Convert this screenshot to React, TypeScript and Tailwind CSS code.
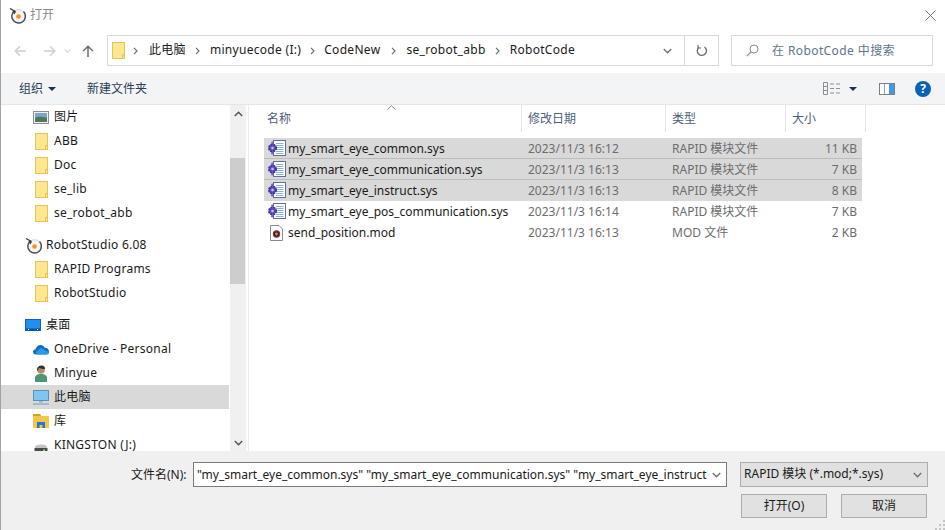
const FONT = "font-['Noto_Sans','Noto_Sans_CJK_SC',sans-serif]";

const FolderIcon = () => (
    <svg width="13" height="17" viewBox="0 0 13 17" className="shrink-0">
        <rect x="0.5" y="0.5" width="12" height="16" fill="#fde88f" stroke="#e6c45c" />
        <path d="M10.500 16.500v-4h2" fill="#f5d670" stroke="#e6c45c" />
    </svg>
);

const RobotIcon = () => (
    <svg width="17" height="17" viewBox="0 0 17 17" className="shrink-0">
        <circle cx="9.500" cy="9.500" r="6.800" fill="#f4f4f4" stroke="#d5d5d5" />
        <path d="M5 4.200A6.800 6.800 0 1 0 14.500 4.500" fill="none" stroke="#4d4d4d" strokeWidth="1.400" />
        <circle cx="9.500" cy="9.500" r="2.300" fill="#f29423" />
        <path d="M1 1.500 6.500 4.500M6.500 4.500l-2.800.3M6.500 4.500 5 7" fill="none" stroke="#333" strokeWidth="1.200" />
    </svg>
);

const SysIcon = () => (
    <svg width="18" height="17" viewBox="0 0 18 17" className="shrink-0">
        <rect x="5.500" y="0.500" width="12" height="15" fill="#fff" stroke="#5f6f9f" />
        <path d="M8 3.500h7.500M8 5.500h7.500M8 7.500h7.500M8 9.500h7.500M8 11.500h7.500M8 13.500h7.500" stroke="#8fb0d8" />
        <circle cx="4.500" cy="8" r="3.700" fill="#5a4fc0" stroke="#3b3192" strokeDasharray="2 1" strokeWidth="1.600" />
        <circle cx="4.500" cy="8" r="1.200" fill="#cfcaf2" />
        <circle cx="4.500" cy="2.800" r="1.400" fill="#6a60cc" />
        <circle cx="4.500" cy="13.200" r="1.400" fill="#6a60cc" />
    </svg>
);

const ModIcon = () => (
    <svg width="13" height="16" viewBox="0 0 13 16" className="shrink-0">
        <path d="M.5.500h8.500l3.500 3.500v11.500H.5z" fill="#fff" stroke="#8a8a8a" />
        <circle cx="6.500" cy="9" r="3.700" fill="#7a2f55" />
        <circle cx="6.500" cy="9" r="2.500" fill="#26222c" />
        <circle cx="6.500" cy="9" r="1.400" fill="#ef8f2c" />
    </svg>
);

const PictureIcon = () => (
    <svg width="16" height="13" viewBox="0 0 16 13" className="shrink-0">
        <rect x="0.500" y="0.500" width="15" height="12" fill="#eef1f4" stroke="#8b8f96" />
        <rect x="2" y="2" width="12" height="5" fill="#7fa5c9" />
        <path d="M2 7c3-2 6-1 12-.5V11H2z" fill="#4c7a5b" />
    </svg>
);

const DesktopIcon = () => (
    <svg width="16" height="12" viewBox="0 0 16 12" className="shrink-0">
        <rect x="0.500" y="0.500" width="15" height="11" fill="#1e90f0" stroke="#0a63b8" />
        <rect x="1" y="9.500" width="14" height="2" fill="#0a4f96" />
        <path d="M3 10.500h1M12 10.500h1" stroke="#fff" />
    </svg>
);

const CloudIcon = () => (
    <svg width="16" height="11" viewBox="0 0 16 11" className="shrink-0">
        <path d="M3 10.500C1 10.500 0 9.200 0 7.800 0 6.300 1.200 5.300 2.600 5.300 3.200 2.700 5.100 1 7.500 1c1.900 0 3.400 1 4.200 2.700 2.500 0 4.300 1.500 4.300 3.600 0 1.900-1.200 3.200-3 3.200z" fill="#0f6cc4" />
        <path d="M5 10.500c-1.300 0-2-.9-2-1.900 0-1.100.9-1.900 2-1.900.6-1.500 1.800-2.400 3.400-2.400 1.700 0 3 1 3.400 2.500 1.900-.2 4.200.7 4.200 2 0 1-.8 1.700-2 1.700z" fill="#2a9be8" />
    </svg>
);

const UserIcon = () => (
    <svg width="14" height="17" viewBox="0 0 14 17" className="shrink-0">
        <path d="M1 17v-4c0-2.500 2.500-4 6-4s6 1.500 6 4v4z" fill="#4f9474" />
        <circle cx="7" cy="5" r="3.800" fill="#b98a6c" />
        <path d="M3 5c0-3 2-4.500 4.500-4.500S11 2 11 4C9 4 6 3.500 5 3 4.500 4 4 5 3.600 6z" fill="#33302c" />
    </svg>
);

const MonitorIcon = () => (
    <svg width="16" height="15" viewBox="0 0 16 15" className="shrink-0">
        <rect x="0.500" y="0.500" width="15" height="10" fill="#7cc6f5" stroke="#5f8fb5" />
        <path d="M6 11h4v1.500H6z" fill="#9fb3c4" />
        <path d="M0 14h16" stroke="#7f98ae" />
    </svg>
);

const LibraryIcon = () => (
    <svg width="16" height="14" viewBox="0 0 16 14" className="shrink-0">
        <path d="M0 0h7l1 2h8v12H0z" fill="#f6c54a" />
        <path d="M0 0h7l1 2H0z" fill="#dd9e1c" />
        <path d="M4 8h8v6H9.500v-3h-3v3H4z" fill="#1f7ad0" />
    </svg>
);

// the reference clips this one at the footer, so it sits low in its row
const DriveIcon = () => (
    <svg width="14" height="16" viewBox="0 0 14 16" className="shrink-0 mt-[14px]">
        <path d="M1 3c0-1.500 2-2.500 6-2.500s6 1 6 2.500v1.500H1z" fill="#c4c4c4" />
        <rect x="0.500" y="4" width="13" height="9" fill="#4a4a4a" />
        <rect x="9" y="5.500" width="2" height="1.500" fill="#7ee06a" />
    </svg>
);

const Chevron = ({ up, className }: { up?: boolean; className?: string }) => (
    <svg width="9" height="6" viewBox="0 0 9 6" className={className}>
        <path d={up ? 'M.8 5 4.500 1.300 8.200 5' : 'M.8 1 4.500 4.700 8.200 1'} fill="none" stroke="currentColor" strokeWidth="1.400" />
    </svg>
);

const Caret = () => (
    <svg width="8" height="4" viewBox="0 0 8 4" className="shrink-0">
        <path d="M0 0h8L4 4z" fill="#1e2f4d" />
    </svg>
);

const Crumb = () => (
    <svg width="5" height="8" viewBox="0 0 5 8" className="shrink-0">
        <path d="M1 .8 4 4 1 7.200" fill="none" stroke="#6f6f6f" strokeWidth="1.200" />
    </svg>
);

const NavArrow = ({ dir, color }: { dir: 'left' | 'right' | 'up'; color: string }) => {
    const d = dir === 'left' ? 'M12 6H1.500M6 1.200 1.200 6 6 10.800' : dir === 'right' ? 'M0 6h10.500M6 1.200 10.800 6 6 10.800' : 'M6 12V1.500M1.200 6 6 1.200 10.800 6';
    return (
        <svg width="12" height="12" viewBox="0 0 12 12" className="shrink-0">
            <path d={d} fill="none" stroke={color} strokeWidth="1.500" />
        </svg>
    );
};

type Side = { label: string; icon: React.ReactNode; indent: number; gap?: boolean; selected?: boolean };

const sideItems: Side[] = [
    { label: '图片', icon: <PictureIcon />, indent: 33 },
    { label: 'ABB', icon: <FolderIcon />, indent: 35 },
    { label: 'Doc', icon: <FolderIcon />, indent: 35 },
    { label: 'se_lib', icon: <FolderIcon />, indent: 35 },
    { label: 'se_robot_abb', icon: <FolderIcon />, indent: 35 },
    { label: 'RobotStudio 6.08', icon: <RobotIcon />, indent: 25, gap: true },
    { label: 'RAPID Programs', icon: <FolderIcon />, indent: 35 },
    { label: 'RobotStudio', icon: <FolderIcon />, indent: 35 },
    { label: '桌面', icon: <DesktopIcon />, indent: 25, gap: true },
    { label: 'OneDrive - Personal', icon: <CloudIcon />, indent: 33 },
    { label: 'Minyue', icon: <UserIcon />, indent: 34 },
    { label: '此电脑', icon: <MonitorIcon />, indent: 33, selected: true },
    { label: '库', icon: <LibraryIcon />, indent: 33 },
    { label: 'KINGSTON (J:)', icon: <DriveIcon />, indent: 34 },
];

const SideRow = ({ item }: { item: Side }) => {
    const textLeft = item.indent < 30 ? 46 : 54;
    return (
        <div className={`h-6 shrink-0 mr-[1px] flex items-center text-[12px] tracking-[0.25px] text-[#1a1a1a] ${item.gap ? 'mt-2' : ''} ${item.selected ? 'bg-[#d9d9d9]' : ''}`}>
            <div className="flex items-center" style={{ marginLeft: item.indent - 1, width: textLeft - item.indent }}>
                {item.icon}
            </div>
            <span className="whitespace-nowrap">{item.label}</span>
        </div>
    );
};

const files = [
    { name: 'my_smart_eye_common.sys', date: '2023/11/3 16:12', type: 'RAPID 模块文件', size: '11 KB', sel: true, line: true },
    { name: 'my_smart_eye_communication.sys', date: '2023/11/3 16:13', type: 'RAPID 模块文件', size: '7 KB', sel: true, line: true },
    { name: 'my_smart_eye_instruct.sys', date: '2023/11/3 16:13', type: 'RAPID 模块文件', size: '8 KB', sel: true },
    { name: 'my_smart_eye_pos_communication.sys', date: '2023/11/3 16:14', type: 'RAPID 模块文件', size: '7 KB' },
    { name: 'send_position.mod', date: '2023/11/3 16:13', type: 'MOD 文件', size: '2 KB', mod: true },
];

const App = () => {
    return (
        <div className={`${FONT} w-[945px] h-[530px] overflow-hidden bg-white flex flex-col border-l border-[#a3a3a3] text-[12px]`}>
            {/* title bar */}
            <div className="h-[30px] shrink-0 flex items-center pl-2">
                <RobotIcon />
                <span className="ml-[4px] text-[#8c8c8c]">打开</span>
                <svg width="11" height="11" viewBox="0 0 11 11" className="ml-auto mr-[9px]">
                    <path d="M.5.500l10 10M10.500.500l-10 10" stroke="#6f6f6f" />
                </svg>
            </div>

            {/* nav row */}
            <div className="h-[43px] shrink-0 pt-[5px]">
                <div className="h-[31px] flex items-center">
                    <div className="w-[106px] shrink-0 flex items-center pl-[13px]">
                        <NavArrow dir="left" color="#d0d0d0" />
                        <div className="w-[18px]" />
                        <NavArrow dir="right" color="#d0d0d0" />
                        <Chevron className="ml-[7px] text-[#d0d0d0] scale-75" />
                        <div className="ml-[10px]">
                            <NavArrow dir="up" color="#6f6f6f" />
                        </div>
                    </div>
                    <div className="w-[612px] h-[31px] border border-[#d9d9d9] flex items-center text-[#1a1a1a] tracking-[0.3px]">
                        <div className="ml-[4px]">
                            <FolderIcon />
                        </div>
                        <div className="ml-[8px]"><Crumb /></div>
                        <span className="ml-[11px] -mt-[2px]">此电脑</span>
                        <div className="ml-[9px]"><Crumb /></div>
                        <span className="ml-[10px] -mt-[2px]">minyuecode (I:)</span>
                        <div className="ml-[9px]"><Crumb /></div>
                        <span className="ml-[9px] -mt-[2px]">CodeNew</span>
                        <div className="ml-[11px]"><Crumb /></div>
                        <span className="ml-[10px] -mt-[2px]">se_robot_abb</span>
                        <div className="ml-[9px]"><Crumb /></div>
                        <span className="ml-[10px] -mt-[2px]">RobotCode</span>
                        <Chevron className="ml-auto mr-[12px] text-[#6f6f6f]" />
                        <div className="w-[34px] h-full border-l border-[#d9d9d9] flex items-center justify-center">
                            <svg width="12" height="13" viewBox="0 0 12 13">
                                <path d="M3 3.200A4.600 4.600 0 1 0 8.500 3" fill="none" stroke="#6f6f6f" strokeWidth="1.400" />
                                <path d="M2 1v3h3" fill="none" stroke="#6f6f6f" strokeWidth="1.200" />
                            </svg>
                        </div>
                    </div>
                    <div className="ml-[12px] w-[202px] h-[31px] border border-[#d9d9d9] flex items-center">
                        <svg width="13" height="13" viewBox="0 0 13 13" className="ml-[14px]">
                            <circle cx="8" cy="5" r="4" fill="none" stroke="#8a8a8a" />
                            <path d="M5 8 .8 12.200" stroke="#b08a7a" strokeWidth="1.200" />
                        </svg>
                        <span className="ml-[13px] text-[#63748c] tracking-[0.4px]">在 RobotCode 中搜索</span>
                    </div>
                </div>
            </div>

            {/* toolbar */}
            <div className="h-[32px] shrink-0 bg-[#f3f4f6] border-b border-[#e4e6e9] flex items-center">
                <span className="ml-[18px] text-[#2c3e57]">组织</span>
                <div className="ml-[5px]"><Caret /></div>
                <span className="ml-[31px] text-[#2c3e57]">新建文件夹</span>
                <svg width="17" height="13" viewBox="0 0 17 13" className="ml-auto">
                    <path d="M.5.500h4v12h-4zM.5 4.500h4M.5 8.500h4" fill="none" stroke="#8f8f8f" />
                    <path d="M7 2h4M13 2h4M7 6.500h4M13 6.500h4M7 11h4M13 11h4" stroke="#8f8f8f" />
                </svg>
                <div className="ml-[9px]"><Caret /></div>
                <svg width="16" height="12" viewBox="0 0 16 12" className="ml-[22px]">
                    <rect x="0.500" y="0.500" width="15" height="11" fill="#fff" stroke="#7f7f7f" />
                    <rect x="10" y="1" width="5" height="10" fill="#3f9ae6" />
                    <path d="M5.500 1v10" stroke="#9f9f9f" />
                </svg>
                <div className="ml-[20px] mr-[14px] w-4 h-4 rounded-full bg-[#0a62b8] flex items-center justify-center text-white text-[12px] font-bold leading-none">?</div>
            </div>

            {/* main */}
            <div className="h-[346px] shrink-0 flex">
                <div className="w-[229px] shrink-0 flex flex-col overflow-hidden">
                    {sideItems.map((item) => (
                        <SideRow key={item.label} item={item} />
                    ))}
                </div>
                <div className="w-[16px] shrink-0 bg-[#f0f0f0] flex flex-col">
                    <div className="h-[53px] pt-[6px] flex justify-center text-[#505050]">
                        <Chevron up />
                    </div>
                    <div className="h-[126px] mr-[1px] bg-[#cdcdcd]" />
                    <div className="flex-1 flex items-end justify-center pb-[5px] text-[#505050]">
                        <Chevron />
                    </div>
                </div>
                <div className="w-[2px] shrink-0" />
                <div className="w-[1px] shrink-0 bg-[#ececec]" />

                <div className="flex-1 relative">
                    <svg width="9" height="5" viewBox="0 0 9 5" className="absolute left-[138px] top-[0px]">
                        <path d="M.5 4.500 4.500.800 8.500 4.500" fill="none" stroke="#8a8a8a" />
                    </svg>
                    <div className="h-[27px] flex items-center text-[#4c607a] pl-[15px]">
                        <div className="w-[258px] h-full flex items-center pl-[3px] border-r border-[#e5e5e5]">名称</div>
                        <div className="w-[144px] h-full flex items-center pl-[6px] border-r border-[#e5e5e5]">修改日期</div>
                        <div className="w-[120px] h-full flex items-center pl-[6px] border-r border-[#e5e5e5]">类型</div>
                        <div className="w-[80px] h-full flex items-center pl-[6px] border-r border-[#e5e5e5]">大小</div>
                    </div>
                    <div className="mt-[6px] ml-[15px] w-[598px] flex flex-col">
                        {files.map((f) => (
                            <div key={f.name} className={`h-[21px] flex items-center ${f.sel ? 'bg-[#d9d9d9]' : ''} ${f.line ? 'shadow-[inset_0_-1px_0_#bcbcbc]' : ''}`}>
                                <div className="w-[24px] shrink-0 flex justify-center pl-[1px]">{f.mod ? <ModIcon /> : <SysIcon />}</div>
                                <div className="w-[240px] whitespace-nowrap text-[#1a1a1a]">{f.name}</div>
                                <div className="w-[144px] text-[#6d6d6d]">{f.date}</div>
                                <div className="w-[120px] text-[#6d6d6d]">{f.type}</div>
                                <div className="w-[65px] text-right text-[#6d6d6d]">{f.size}</div>
                            </div>
                        ))}
                    </div>
                </div>
            </div>

            {/* footer */}
            <div className="flex-1 bg-[#f0f0f0] relative flex flex-col pt-[11px] pl-[130px]">
                <div className="flex items-center h-[25px]">
                    <span className="w-[62px] text-[#1a1a1a] whitespace-nowrap">文件名(N):</span>
                    <div className="w-[534px] h-[25px] bg-white border border-[#7a7a7a] flex items-center pl-[3px]">
                        <span className="flex-1 overflow-hidden whitespace-nowrap text-[#1a1a1a]">"my_smart_eye_common.sys" "my_smart_eye_communication.sys" "my_smart_eye_instruct</span>
                        <Chevron className="mx-[5px] shrink-0 text-[#6f6f6f]" />
                    </div>
                    <div className="ml-[13px] w-[188px] h-[25px] bg-[#e1e1e1] border border-[#adadad] flex items-center pl-[3px]">
                        <span className="flex-1 whitespace-nowrap text-[#1a1a1a] -mt-[2px]">RAPID 模块 (*.mod;*.sys)</span>
                        <Chevron className="mr-[5px] text-[#6f6f6f]" />
                    </div>
                </div>
                <div className="flex mt-[7px] pl-[610px] gap-[14px]">
                    <div className="w-[86px] h-[24px] bg-[#e1e1e1] border border-[#adadad] flex items-center justify-center text-[#1a1a1a]">打开(O)</div>
                    <div className="w-[86px] h-[24px] bg-[#e1e1e1] border border-[#adadad] flex items-center justify-center text-[#1a1a1a]">取消</div>
                </div>
                <svg width="11" height="11" viewBox="0 0 11 11" className="absolute right-0 bottom-0">
                    <path d="M9 1h2v2H9zM5 5h2v2H5zM9 5h2v2H9zM1 9h2v2H1zM5 9h2v2H5zM9 9h2v2H9z" fill="#c4c4c4" />
                </svg>
            </div>
        </div>
    );
};

export default App;
